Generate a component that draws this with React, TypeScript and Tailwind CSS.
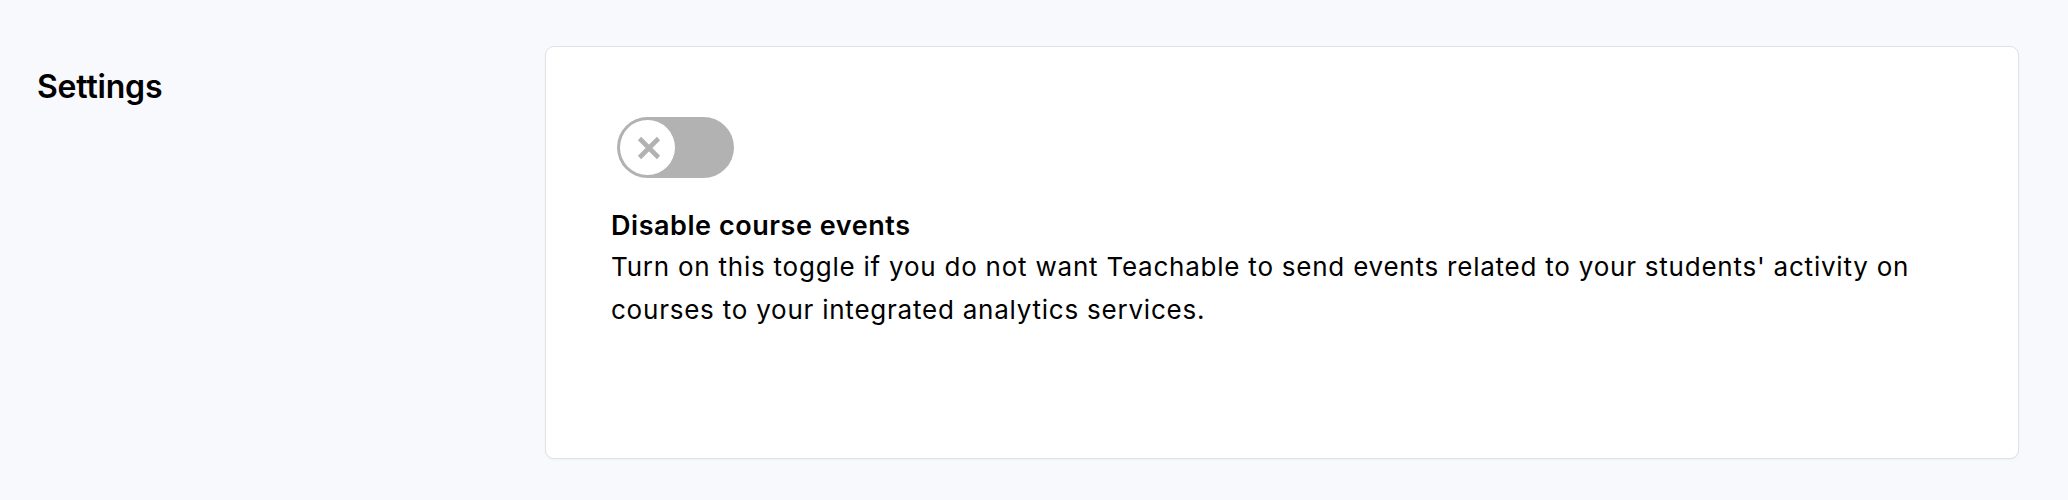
import React from "react";

export default function App() {
  return (
    <div
      className="min-h-[500px] bg-[#f8f9fd] flex pl-[37px] pr-[49px] pt-[46px] pb-[41px] text-black"
      style={{ fontFamily: "Inter, 'Noto Sans', sans-serif" }}
    >
      <div className="w-[508px] shrink-0">
        <h2 className="mt-[21px] text-[32px] leading-[40px] font-semibold tracking-[-0.2px]">Settings</h2>
      </div>
      <div className="flex-1 bg-white border border-[#e1e1e8] rounded-[9px] shadow-[0_1px_2px_rgba(0,0,0,0.04)] pt-[70px] px-[65px] h-[413px]">
        <button
          type="button"
          aria-label="Disable course events"
          className="ml-[6px] w-[117px] h-[61px] rounded-full bg-[#b2b2b2] p-[3px] flex items-center"
        >
          <span className="w-[55px] h-[55px] rounded-full bg-white flex items-center justify-center">
            <svg width="24" height="24" viewBox="0 0 24 24" className="ml-[2px]">
              <path d="M2.5 2.5 L21.5 21.5 M21.5 2.5 L2.5 21.5" stroke="#b2b2b2" strokeWidth="4.6" strokeLinecap="butt" />
            </svg>
          </span>
        </button>
        <div className="mt-[29px] text-[27px] leading-[38px] font-semibold tracking-[0.55px]">Disable course events</div>
        <p className="text-[26px] leading-[43px] tracking-[0.77px] max-w-[1330px]">
          Turn on this toggle if you do not want Teachable to send events related to your students' activity on courses to your integrated analytics services.
        </p>
      </div>
    </div>
  );
}
